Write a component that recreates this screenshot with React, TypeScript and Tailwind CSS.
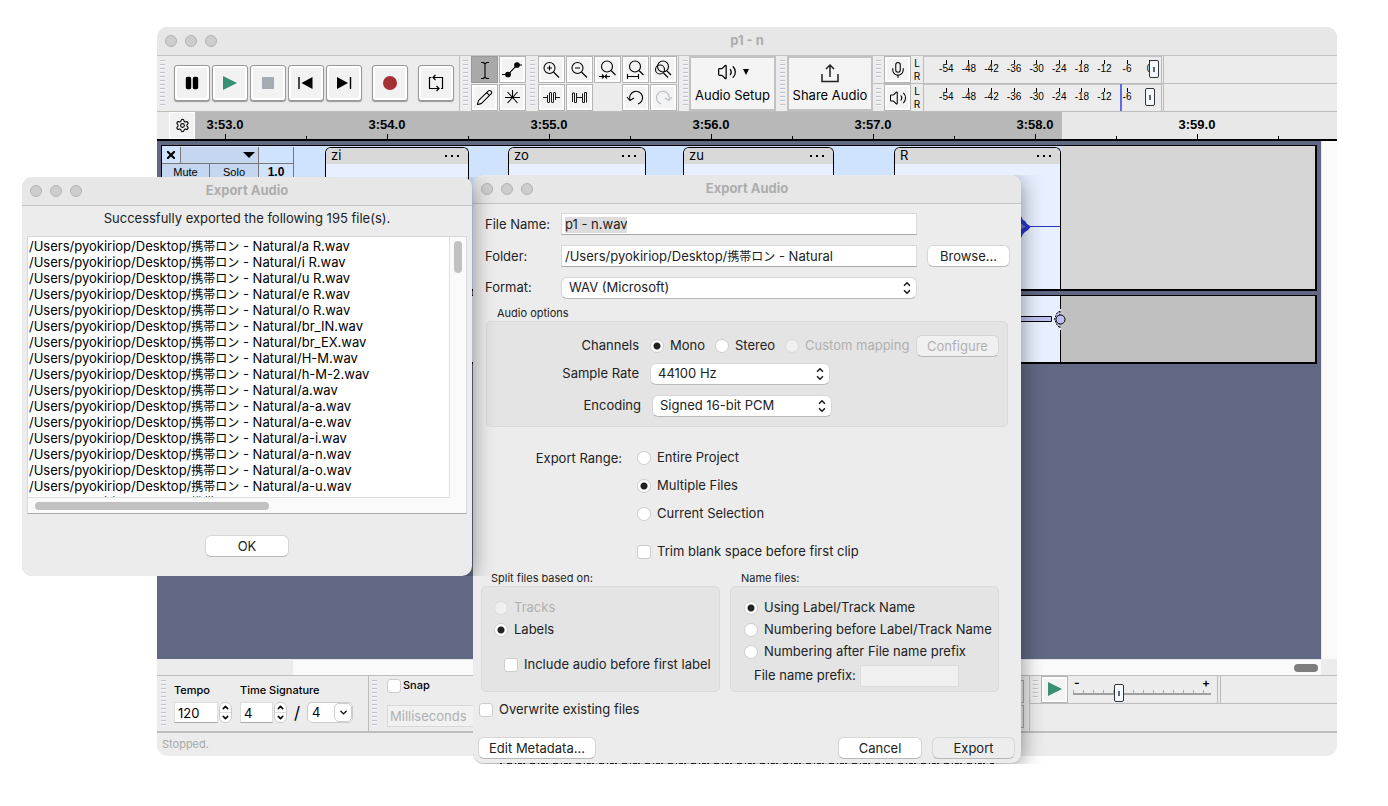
import { ChevronDown, ChevronUp, Mic, Pencil, Settings, Volume2 } from "lucide-react";
import type { ReactNode } from "react";

const files = [
  "a R", "i R", "u R", "e R", "o R", "br_IN", "br_EX", "H-M", "h-M-2",
  "a", "a-a", "a-e", "a-i", "a-n", "a-o", "a-u", "a-R",
];

const seconds = ["3:53.0", "3:54.0", "3:55.0", "3:56.0", "3:57.0", "3:58.0", "3:59.0"];
const decibels = ["-54", "-48", "-42", "-36", "-30", "-24", "-18", "-12", "-6", "0"];

const sliderThumb =
  "appearance-none bg-transparent [&::-webkit-slider-thumb]:h-[18px] [&::-webkit-slider-thumb]:w-[10px] [&::-webkit-slider-thumb]:appearance-none [&::-webkit-slider-thumb]:rounded-[2px] [&::-webkit-slider-thumb]:border [&::-webkit-slider-thumb]:border-[#333] [&::-webkit-slider-thumb]:bg-[linear-gradient(#667,#667)] [&::-webkit-slider-thumb]:bg-[length:2px_5px] [&::-webkit-slider-thumb]:bg-center [&::-webkit-slider-thumb]:bg-no-repeat [&::-webkit-slider-thumb]:bg-[#f4f8ff]";

function TrafficLights() {
  return (
    <div className="flex w-24 gap-2 pl-2">
      <span className="size-3 rounded-full border border-[#b2b2b2] bg-[#cdcdcd]" />
      <span className="size-3 rounded-full border border-[#b2b2b2] bg-[#cdcdcd]" />
      <span className="size-3 rounded-full border border-[#b2b2b2] bg-[#cdcdcd]" />
    </div>
  );
}

function TitleBar({ title }: { title: string }) {
  return (
    <div className="flex h-[29px] shrink-0 items-center justify-between border-b border-[#c4c4c4] bg-[#e7e7e7]">
      <TrafficLights />
      <h2 className="text-[13px] font-bold text-[#adadad]">{title}</h2>
      <span className="w-24" />
    </div>
  );
}

function Grip() {
  return (
    <span className="my-1 w-[5px] shrink-0 bg-[repeating-linear-gradient(#bcc2cf_0_1px,#f8f8f8_1px_2px,transparent_2px_4px)]" />
  );
}

function TransportButton({ label, children }: { label: string; children: ReactNode }) {
  return (
    <button
      aria-label={label}
      className="flex size-9 shrink-0 items-center justify-center rounded-[3px] border border-[#999] bg-[#f2f2f2] shadow-[inset_0_0_0_2px_#fff,0_1px_1px_#999]"
    >
      <svg width="24" height="24" viewBox="0 0 24 24" fill="none" stroke="#000" strokeWidth="1.4">
        {children}
      </svg>
    </button>
  );
}

function ToolButton({ label, active, children }: { label: string; active?: boolean; children: ReactNode }) {
  return (
    <button
      aria-label={label}
      className={
        active
          ? "flex size-[27px] shrink-0 items-center justify-center border border-[#999] bg-[#a9a9a9]"
          : "flex size-[27px] shrink-0 items-center justify-center border border-[#b4b4b4] bg-[#f3f3f3] shadow-[inset_0_0_0_2px_#fcfcfc]"
      }
    >
      {children}
    </button>
  );
}

function Glyph({ stroke = "#000", children }: { stroke?: string; children: ReactNode }) {
  return (
    <svg width="27" height="27" viewBox="0 0 27 27" fill="none" stroke={stroke} strokeWidth="1.1" className="shrink-0">
      {children}
    </svg>
  );
}

function Meter({ label, value, children }: { label: string; value: number; children: ReactNode }) {
  return (
    <div className="flex h-7 border-b border-[#bdbdbd]">
      <span className="w-[3px]" />
      <Grip />
      <span className="w-[3px]" />
      <ToolButton label={label}>{children}</ToolButton>
      <div className="flex w-3 flex-col items-center justify-around text-[10px] leading-3">
        <span>L</span>
        <span>R</span>
      </div>
      <div className="relative flex w-[238px] border-l border-[#bbb] bg-[linear-gradient(#c4c4c8,#c4c4c8)] bg-[length:100%_1px] bg-[0_13px] bg-no-repeat pl-[11px]">
        {decibels.map((db) => (
          <span key={db} className="flex flex-1 flex-col items-center pt-1">
            <span className="h-1 w-px bg-black" />
            <span className="bg-[#ececec] font-[Liberation_Sans,Arial,sans-serif] text-[10px] leading-[10px]">{db}</span>
          </span>
        ))}
        {value < 100 && <span className="absolute left-[196px] h-full w-[2px] bg-[#6068f0]" />}
        <input
          type="range"
          aria-label={label + " level"}
          defaultValue={value}
          className={`absolute top-1 left-0 h-[18px] w-[235px] ${sliderThumb}`}
        />
      </div>
      <span className="w-[3px] border-x border-[#bbb]" />
    </div>
  );
}

function Clip({ name, className, children }: { name: string; className: string; children?: ReactNode }) {
  return (
    <div className={`flex shrink-0 flex-col overflow-hidden rounded-t-[6px] border border-b-0 border-black bg-[#e8f0ff] ${className}`}>
      <div className="flex h-4 items-center justify-between bg-[#d9d9d9] px-[5px] text-[13px]">
        <span>{name}</span>
        <span className="mr-1 flex gap-1">
          <i className="size-[2px] bg-black" />
          <i className="size-[2px] bg-black" />
          <i className="size-[2px] bg-black" />
        </span>
      </div>
      <div className="flex flex-1 items-center justify-end">{children}</div>
    </div>
  );
}

function Toolbars() {
  return (
    <div className="flex h-14 shrink-0 overflow-hidden border-b border-[#bdbdbd]">
      <div className="flex w-[303px] shrink-0 border-r border-[#bdbdbd] pl-[3px]">
        <Grip />
        <div className="flex items-center gap-[2px] pb-[2px] pl-[9px]">
          <TransportButton label="Pause">
            <rect x="6.5" y="6.5" width="4" height="11" rx="1" fill="#000" />
            <rect x="13.5" y="6.5" width="4" height="11" rx="1" fill="#000" />
          </TransportButton>
          <TransportButton label="Play">
            <path d="M5 5 L19 12 L5 19Z" fill="#379074" stroke="none" />
          </TransportButton>
          <TransportButton label="Stop">
            <rect x="6" y="6" width="12" height="12" fill="#a4abb3" stroke="none" />
          </TransportButton>
          <TransportButton label="Skip to Start">
            <path d="M5 6V18" />
            <path d="M18.5 6V18L7.5 12Z" fill="#000" stroke="none" />
          </TransportButton>
          <TransportButton label="Skip to End">
            <path d="M18.5 6V18" />
            <path d="M5 6V18L16 12Z" fill="#000" stroke="none" />
          </TransportButton>
          <span className="w-[6px]" />
          <TransportButton label="Record">
            <circle cx="12" cy="12" r="7" fill="#a52f31" stroke="none" />
          </TransportButton>
          <span className="w-[6px]" />
          <TransportButton label="Loop">
            <path d="M7.5 6.5H5.5V17.5H15M12.5 15L15 17.5L12.5 20M17 17.5H18.5V6.5H9M11.5 4L9 6.5L11.5 9" strokeWidth="1.2" />
          </TransportButton>
        </div>
      </div>

      <div className="flex pl-[3px]">
        <Grip />
        <div className="grid grid-cols-2 gap-px pl-[3px]">
          <ToolButton label="Selection Tool" active>
            <Glyph>
              <path d="M10 6.5H12.5L14 8L15.5 6.5H18M14 8V21M10 22.5H12.5L14 21L15.5 22.5H18" />
            </Glyph>
          </ToolButton>
          <ToolButton label="Envelope Tool">
            <Glyph>
              <path d="M3 18.5H9L18 9H23" />
              <circle cx="9" cy="18.5" r="2.3" fill="#000" />
              <circle cx="18" cy="9" r="2.3" fill="#000" />
            </Glyph>
          </ToolButton>
          <ToolButton label="Draw Tool">
            <Pencil size={17} strokeWidth={1.5} />
          </ToolButton>
          <ToolButton label="Multi-Tool">
            <Glyph>
              <path d="M6 13.5H21M8.500 8L18.500 19M18.500 8L8.500 19M13.500 6V13" />
            </Glyph>
          </ToolButton>
        </div>
      </div>

      <div className="flex pl-1">
        <Grip />
        <div className="grid grid-cols-5 gap-px pl-[3px]">
          <ToolButton label="Zoom In">
            <Glyph>
              <circle cx="11.5" cy="12" r="5.5" />
              <path d="M15.5 16L21 21.5M9 12H14M11.5 9.5V14.5" />
            </Glyph>
          </ToolButton>
          <ToolButton label="Zoom Out">
            <Glyph>
              <circle cx="11.5" cy="12" r="5.5" />
              <path d="M15.5 16L21 21.5M9 12H14" />
            </Glyph>
          </ToolButton>
          <ToolButton label="Fit Selection">
            <Glyph>
              <circle cx="13" cy="10.5" r="5.5" />
              <path d="M17 14.5L21.5 19M5 20.5H9.5M11.5 20.5H16M8 18.5L10 20.5L8 22.5M13 18.5L11 20.5L13 22.5" />
            </Glyph>
          </ToolButton>
          <ToolButton label="Fit Project">
            <Glyph>
              <circle cx="13" cy="10.5" r="5.5" />
              <path d="M17 14.5L21.5 19M5.5 20.5H16.5M5.5 18V23M16.5 18V23" />
            </Glyph>
          </ToolButton>
          <ToolButton label="Zoom Toggle">
            <Glyph>
              <circle cx="13" cy="10.5" r="5.5" />
              <circle cx="10" cy="13.5" r="4.5" />
              <path d="M16.5 14.5L21 19M13.5 17L18 21.5" />
            </Glyph>
          </ToolButton>
          <ToolButton label="Trim">
            <Glyph>
              <path
                d="M5 13.5H9M9.5 11V18M11.5 9V18M13.5 9V18M15.5 9V18M17.5 9V16M18 13.5H22M9.5 18.5H11.5M11.5 8.5H13.5M13.5 18.5H15.5M15.5 8.5H17.500"
                strokeWidth="0.9"
              />
            </Glyph>
          </ToolButton>
          <ToolButton label="Silence">
            <Glyph>
              <path
                d="M6.5 18V9H8.500V18.5H10.5V13.5H16.5M16.5 18V9.5M16.5 18.5H18.5V8.500H20.5V18.500M10.5 13.500V9"
                strokeWidth="0.9"
              />
            </Glyph>
          </ToolButton>
          <span />
          <ToolButton label="Undo">
            <Glyph>
              <path d="M8 16A6.5 6.5 0 1 1 16 20M5 13L8 16.5L12 14" />
            </Glyph>
          </ToolButton>
          <ToolButton label="Redo">
            <Glyph stroke="#b9bdc6">
              <path d="M19 16A6.5 6.5 0 1 0 11 20M22 13L19 16.5L15 14" />
            </Glyph>
          </ToolButton>
        </div>
      </div>

      <div className="ml-px flex border-l border-[#bdbdbd] pl-1">
        <Grip />
        <button className="ml-px flex w-[87px] flex-col items-center justify-center gap-1 border-2 border-[#c2c2c2] bg-[#f4f4f4] text-[13px]">
          <span className="flex items-center gap-[6px]">
            <Volume2 size={20} strokeWidth={1.5} />
            <span className="border-x-[3px] border-t-[6px] border-x-transparent border-t-black" />
          </span>
          Audio Setup
        </button>
      </div>
      <div className="flex pl-1">
        <Grip />
        <button className="ml-[2px] flex w-[86px] flex-col items-center justify-center gap-[2px] border-2 border-[#c2c2c2] bg-[#f4f4f4] text-[13px]">
          <svg width="20" height="22" viewBox="0 0 20 22" fill="none" stroke="#222" strokeWidth="1.5">
            <path d="M10 15V3M6 7L10 3L14 7M2 12V19.5H18V12" />
          </svg>
          Share Audio
        </button>
      </div>
      <div className="flex-1">
        <Meter label="Record" value={100}>
          <Mic size={18} strokeWidth={1.4} />
        </Meter>
        <Meter label="Playback" value={98}>
          <Volume2 size={18} strokeWidth={1.4} />
        </Meter>
      </div>
    </div>
  );
}

function TimeRuler() {
  return (
    <div className="flex h-[29px] shrink-0 overflow-hidden border-b-2 border-black">
      <button aria-label="Timeline Options" className="ml-3 flex w-[26px] shrink-0 items-center justify-center border border-white bg-[#f2f2f2]">
        <Settings size={15} strokeWidth={1.7} />
      </button>
      <div className="flex min-w-0 flex-1 bg-[linear-gradient(to_right,#b8b8b8_867px,#e8e8e8_867px)] pl-[11px]">
        {seconds.map((s) => (
          <div key={s} className="flex w-[162px] shrink-0 items-end">
            <div className="flex h-full w-[38px] flex-col items-center justify-between pt-[5px]">
              <span className="font-[Liberation_Sans,Arial,sans-serif] text-[13px] leading-4 font-bold">{s}</span>
              <span className="h-[5px] w-px bg-black" />
            </div>
            <span className="ml-[62px] h-[3px] w-px bg-black" />
          </div>
        ))}
      </div>
    </div>
  );
}

function Tracks() {
  return (
    <div className="flex min-h-0 flex-1">
      <div className="flex min-w-0 flex-1 flex-col gap-1 bg-[#626884] px-1 pt-1">
        <div className="flex h-[146px] border border-r-2 border-b-2 border-black bg-[#d6d6d6]">
          <div className="flex shrink-0 bg-[#cfe2fe] pt-px">
            <div className="w-[132px] text-[11px]">
              <div className="flex h-[17px] divide-x divide-[#777] border-r border-b border-[#777]">
                <button aria-label="Close track" className="flex w-[19px] items-center justify-center">
                  <svg width="8" height="8" stroke="#000" strokeWidth="2">
                    <path d="M0 0L8 8M8 0L0 8" />
                  </svg>
                </button>
                <button aria-label="Track menu" className="flex w-[78px] items-center justify-end bg-[#c5d6f0] pr-[3px]">
                  <span className="border-x-[6px] border-t-[6px] border-x-transparent border-t-black" />
                </button>
                <span className="flex-1" />
              </div>
              <div className="flex h-[18px] divide-x divide-[#777] border-r border-b border-[#777] font-[Liberation_Sans,Arial,sans-serif]">
                <button className="w-12 bg-[#c5d6f0]">Mute</button>
                <button className="w-[49px] bg-[#c5d6f0]">Solo</button>
                <span className="flex-1 text-center text-[12px] leading-4 font-bold">1.0</span>
              </div>
            </div>
            <Clip name="zi" className="ml-[31px] w-[144px]" />
            <Clip name="zo" className="ml-[39px] w-[138px]" />
            <Clip name="zu" className="ml-[37px] w-[151px]" />
            <Clip name="R" className="ml-[60px] w-[167px]">
              <svg width="60" height="28" viewBox="0 0 60 28">
                <path d="M0 0H18L20 4L21 3L23 7L25 8L27 11L31 13.5L28 17L25 19L23 21L21 25L19 27H0Z" fill="#2a35c4" />
                <path d="M0 8L18 9L26 13.5L18 18L0 20Z" fill="#6a6fce" />
                <path d="M28 13.5H60" stroke="#2a35c4" />
              </svg>
            </Clip>
          </div>
        </div>
        <div className="flex h-[69px] border border-r-2 border-b-2 border-black bg-[#c0c0c0]">
          <div className="flex w-[899px] justify-end bg-[#e8f0ff]">
            <svg width="55" height="66" viewBox="0 0 55 66" className="overflow-visible" fill="#bcc0f0" stroke="#000">
              <path d="M54.5 0V13M54.5 34V66" />
              <path d="M0 20.5H45.5V25.5H0" />
              <path d="M54 15L51 17L48.5 23L51 29L54 32Z" strokeDasharray="2 1" />
              <circle cx="54.5" cy="23.5" r="4.5" />
            </svg>
          </div>
        </div>
      </div>
      <div className="w-4 border-l border-[#e4e4e4] bg-[#fafafa]" />
    </div>
  );
}

function Stepper({ label, value, className }: { label: string; value: string; className: string }) {
  return (
    <span className="flex items-center gap-px">
      <input aria-label={label} defaultValue={value} className={`h-[21px] border border-b-[#aaa] border-[#ddd] bg-white pl-[3px] text-[13px] ${className}`} />
      <span className="flex h-[21px] w-[13px] flex-col divide-y divide-[#ddd] rounded-[6px] border border-[#ccc] bg-white">
        <button aria-label={label + " up"} className="flex flex-1 items-center justify-center">
          <ChevronUp size={9} strokeWidth={4} />
        </button>
        <button aria-label={label + " down"} className="flex flex-1 items-center justify-center">
          <ChevronDown size={9} strokeWidth={4} />
        </button>
      </span>
    </span>
  );
}

function BottomBar() {
  return (
    <>
      <div className="flex h-4 shrink-0">
        <span className="w-[136px]" />
        <div className="flex flex-1 items-center justify-end border-t border-[#e4e4e4] bg-[#fafafa] pr-[3px]">
          <span className="h-2 w-6 rounded-full bg-[#7d7d7d]" />
        </div>
        <span className="w-4" />
      </div>
      <div className="flex h-[58px] shrink-0 overflow-hidden border-t border-b-2 border-[#bdbdbd]">
        <div className="flex w-[212px] shrink-0 border-r border-[#bdbdbd] pl-1">
          <Grip />
          <div className="flex gap-2 pt-2 pl-2">
            <div>
              <div className="h-[18px] text-[11px] leading-3 font-medium">Tempo</div>
              <Stepper label="Tempo" value="120" className="w-11" />
            </div>
            <div>
              <div className="h-[18px] text-[11px] leading-3 font-medium">Time Signature</div>
              <div className="flex items-center">
                <Stepper label="Beats per measure" value="4" className="w-[33px]" />
                <span className="w-5 text-center text-[17px] leading-5">/</span>
                <span className="relative flex">
                  <select aria-label="Beat unit" className="h-[21px] w-[46px] appearance-none rounded-[5px] border border-[#ccc] bg-white pl-1 text-[13px]">
                    <option>4</option>
                  </select>
                  <span className="pointer-events-none absolute top-px right-px flex h-[19px] w-[18px] items-center justify-center rounded-[5px] border border-[#ccc]">
                    <ChevronDown size={11} strokeWidth={3} />
                  </span>
                </span>
              </div>
            </div>
          </div>
        </div>
        <div className="flex w-[661px] shrink-0 border-r border-[#bdbdbd] pl-[3px]">
          <Grip />
          <div className="flex flex-1 flex-col items-start pt-[3px] pl-[10px]">
            <label className="flex items-start gap-[2px] text-[11px] leading-3 font-medium">
              <input type="checkbox" className="size-[14px] appearance-none rounded-[3px] border border-[#ccc] bg-white" />
              Snap
            </label>
            <input disabled aria-label="Snap to" defaultValue="Milliseconds" className="mt-3 h-[22px] w-[120px] border border-[#d8d8d8] bg-[#f1f1f1] pl-[2px] text-[13px] text-[#b0b0b0]" />
          </div>
          <div className="mr-[5px] flex w-20 flex-col justify-center gap-[2px]">
            <span className="h-[23px] border border-[#aaa]" />
            <span className="h-[23px] border border-[#aaa]" />
          </div>
        </div>
        <div className="flex-1">
          <div className="flex h-7 border-b border-[#bdbdbd] pl-[3px]">
            <Grip />
            <span className="w-[3px]" />
            <ToolButton label="Play at Speed">
              <svg width="14" height="15" viewBox="0 0 14 15">
                <path d="M0 0L14 7L0 14Z" fill="#379074" />
              </svg>
            </ToolButton>
            <div className="relative ml-[5px] w-[138px]">
              <div className="flex h-[14px] justify-between px-[1px] text-[12px] leading-[14px] font-semibold">
                <span>-</span>
                <span>+</span>
              </div>
              <div className="h-[5px] border-b-2 border-[#a0a0a0] bg-[repeating-linear-gradient(to_right,#a8a8a8_0_1px,transparent_1px_10px)]" />
              <input type="range" aria-label="Playback Speed" defaultValue={32} className={`absolute top-2 left-0 h-[18px] w-[138px] ${sliderThumb}`} />
            </div>
            <span className="ml-[6px] w-1 border-x border-[#bbb]" />
          </div>
        </div>
      </div>
      <div className="flex h-[23px] shrink-0 items-center pl-[5px] text-[11px] text-[#a8a8a8]">Stopped.</div>
    </>
  );
}

function PushButton({ children, className, disabled }: { children: ReactNode; className: string; disabled?: boolean }) {
  return (
    <button
      disabled={disabled}
      className={`h-[22px] shrink-0 rounded-[6px] border border-[#d6d6d6] border-b-[#b8b8b8] text-[13px] leading-4 ${className}`}
    >
      {children}
    </button>
  );
}

function PopUp({ id, value, className }: { id: string; value: string; className: string }) {
  return (
    <span className="relative flex items-center">
      <select id={id} className={`h-[22px] appearance-none rounded-[6px] border border-[#d6d6d6] border-b-[#b8b8b8] bg-white pl-[7px] text-[13px] ${className}`}>
        <option>{value}</option>
      </select>
      <span className="pointer-events-none absolute right-[5px] flex flex-col">
        <ChevronUp size={10} strokeWidth={4} className="-mb-px" />
        <ChevronDown size={10} strokeWidth={4} className="-mt-px" />
      </span>
    </span>
  );
}

type ChoiceProps = { label: string; name?: string; checked?: boolean; disabled?: boolean; className?: string };

function Radio({ label, name, checked, disabled, className = "" }: ChoiceProps) {
  return (
    <label className={`flex items-center gap-[6px] text-[13px] ${disabled ? "text-[#b0b0b0]" : ""} ${className}`}>
      <input
        type="radio"
        name={name}
        defaultChecked={checked}
        disabled={disabled}
        className="size-[14px] appearance-none rounded-full border border-[#cdcdcd] bg-white checked:bg-[radial-gradient(circle,#222_3px,#fff_4px)] disabled:border-[#dadada] disabled:bg-[#f0f0f0]"
      />
      {label}
    </label>
  );
}

function Checkbox({ label, className = "" }: ChoiceProps) {
  return (
    <label className={`flex items-center gap-[6px] text-[13px] ${className}`}>
      <input type="checkbox" className="size-[14px] appearance-none rounded-[3px] border border-[#cdcdcd] bg-white" />
      {label}
    </label>
  );
}

function Path({ name }: { name?: string }) {
  return (
    <>
      /Users/pyokiriop/Desktop/<span className="text-[12px]">携帯ロン</span> - Natural{name}
    </>
  );
}

function ResultDialog() {
  return (
    <section className="absolute top-[177px] left-[22px] w-[450px] rounded-[10px] bg-[#ececec] pb-[19px] shadow-[0_4px_22px_rgba(0,0,0,0.45)] [clip-path:inset(0_-30px_0_0_round_10px_0_0_10px)]">
      <div className="overflow-hidden rounded-t-[10px]">
        <TitleBar title="Export Audio" />
      </div>
      <p className="pt-px pb-[7px] text-center text-[13px] leading-[22px]">Successfully exported the following 195 file(s).</p>
      <div className="mx-[5px] grid grid-cols-[1fr_16px] border border-[#d8d8d8] border-b-[#aaa] bg-[#fafafa]">
        <ul className="h-[261px] overflow-hidden border-r border-b border-[#e0e0e0] bg-white pt-px pl-px text-[13px] leading-4 whitespace-nowrap text-black">
          {files.map((f) => (
            <li key={f} className="h-4">
              <Path name={`/${f}.wav`} />
            </li>
          ))}
        </ul>
        <div className="flex justify-center pt-1">
          <span className="h-8 w-2 rounded-full bg-[#c1c1c1]" />
        </div>
        <div className="flex h-[15px] items-center pl-[7px]">
          <span className="h-2 w-[234px] rounded-full bg-[#c1c1c1]" />
        </div>
      </div>
      <div className="mt-[21px] flex justify-center">
        <PushButton className="w-[84px] bg-white">OK</PushButton>
      </div>
    </section>
  );
}

function GroupBox({ title, className, titleClass, children }: { title: string; className: string; titleClass: string; children: ReactNode }) {
  return (
    <fieldset className="flex flex-col">
      <legend className={`h-4 text-[11px] leading-4 ${titleClass}`}>{title}</legend>
      <div className={`flex-1 rounded-[5px] border border-[#dadada] bg-[#e4e4e4] ${className}`}>{children}</div>
    </fieldset>
  );
}

function ExportDialog() {
  return (
    <section className="absolute top-[175px] left-[473px] w-[548px] rounded-[10px] bg-[#ececec] text-[13px] shadow-[0_4px_22px_rgba(0,0,0,0.45)] [clip-path:inset(0_-30px_-1px_0_round_10px_0_0_10px)]">
      <div className="overflow-hidden rounded-t-[10px]">
        <TitleBar title="Export Audio" />
      </div>
      <div className="grid grid-cols-[76px_356px_82px] items-center gap-y-[10px] pt-[9px] pl-3">
        <label htmlFor="file-name" className="pt-px">File Name:</label>
        <span className="flex h-[22px] items-center border border-[#d8d8d8] border-b-[#aaa] bg-white px-[3px] pt-px">
          <input id="file-name" defaultValue="p1 - n.wav" className="h-4 w-[62px] bg-[#dcdcdc]" />
        </span>
        <span />
        <span className="pt-px">Folder:</span>
        <span className="flex h-[22px] items-center border border-[#d8d8d8] border-b-[#aaa] bg-white px-[3px] pt-px whitespace-nowrap">
          <span>
            <Path />
          </span>
        </span>
        <PushButton className="ml-[10px] w-[83px] bg-white">Browse...</PushButton>
        <label htmlFor="format">Format:</label>
        <PopUp id="format" value="WAV (Microsoft)" className="w-[356px]" />
      </div>

      <div className="mx-[13px] mt-[6px]">
        <GroupBox title="Audio options" titleClass="pl-[11px]" className="flex flex-col pt-[13px] pb-[9px]">
          <div className="flex h-[22px] items-center">
            <span className="w-[152px] text-right">Channels</span>
            <Radio name="channels" label="Mono" checked className="ml-[11px] w-[65px]" />
            <Radio name="channels" label="Stereo" className="w-[70px]" />
            <Radio name="channels" label="Custom mapping" disabled className="w-[131px] whitespace-nowrap" />
            <PushButton disabled className="w-[83px] bg-[#f0f0f0] text-[#b0b0b0]">Configure</PushButton>
          </div>
          <div className="mt-[6px] flex items-center gap-[11px]">
            <label htmlFor="rate" className="w-[152px] text-right">Sample Rate</label>
            <PopUp id="rate" value="44100 Hz" className="w-[180px]" />
          </div>
          <div className="mt-[10px] flex items-center gap-[11px]">
            <label htmlFor="encoding" className="w-[154px] text-right">Encoding</label>
            <PopUp id="encoding" value="Signed 16-bit PCM" className="w-[180px]" />
          </div>
        </GroupBox>
      </div>

      <div className="mt-[17px] flex gap-[15px]">
        <span className="w-[149px] text-right leading-7">Export Range:</span>
        <div>
          <Radio name="range" label="Entire Project" className="h-7" />
          <Radio name="range" label="Multiple Files" checked className="h-7" />
          <Radio name="range" label="Current Selection" className="h-7" />
          <Checkbox label="Trim blank space before first clip" className="mt-[10px] h-7" />
        </div>
      </div>

      <div className="mt-1 ml-2 grid grid-cols-[239px_269px] gap-[10px]">
        <GroupBox title="Split files based on:" titleClass="pl-[10px]" className="pt-[10px] pl-3">
          <Radio name="split" label="Tracks" disabled className="h-[22px]" />
          <Radio name="split" label="Labels" checked className="h-[22px]" />
          <Checkbox label="Include audio before first label" className="mt-[13px] ml-[10px] h-[22px] whitespace-nowrap" />
        </GroupBox>
        <GroupBox title="Name files:" titleClass="pl-[11px]" className="pt-[10px] pb-1 pl-[13px]">
          <Radio name="naming" label="Using Label/Track Name" checked className="h-[22px]" />
          <Radio name="naming" label="Numbering before Label/Track Name" className="h-[22px] whitespace-nowrap" />
          <Radio name="naming" label="Numbering after File name prefix" className="h-[22px]" />
          <label className="mt-[2px] ml-[10px] flex items-center gap-1">
            File name prefix:
            <input disabled className="h-[22px] w-[99px] border border-[#dcdcdc] bg-[#f0f0f0]" />
          </label>
        </GroupBox>
      </div>

      <Checkbox label="Overwrite existing files" className="mt-[7px] ml-[6px] h-[22px]" />
      <div className="mt-4 flex gap-[10px] pr-[6px] pb-1 pl-[5px]">
        <PushButton className="w-[118px] bg-white">Edit Metadata...</PushButton>
        <span className="flex-1" />
        <PushButton className="w-[84px] bg-white">Cancel</PushButton>
        <PushButton className="w-[83px] bg-[#ededed]">Export</PushButton>
      </div>
      <svg className="absolute bottom-[-1px] left-[27px]" width="494" height="1">
        <path d="M0 0.5H494" stroke="#222" strokeDasharray="2 5 5 3 1 2 4 1" />
      </svg>
    </section>
  );
}

export default function App() {
  return (
    <main className="relative min-h-screen overflow-hidden bg-white font-[Inter,'Noto_Sans_CJK_JP',sans-serif] text-[#222]">
      <section className="absolute top-[27px] right-[51px] bottom-[50px] left-[157px] flex flex-col overflow-hidden rounded-[10px] bg-[#ececec] text-black">
        <TitleBar title="p1 - n" />
        <Toolbars />
        <TimeRuler />
        <Tracks />
        <BottomBar />
      </section>
      <ExportDialog />
      <ResultDialog />
    </main>
  );
}
